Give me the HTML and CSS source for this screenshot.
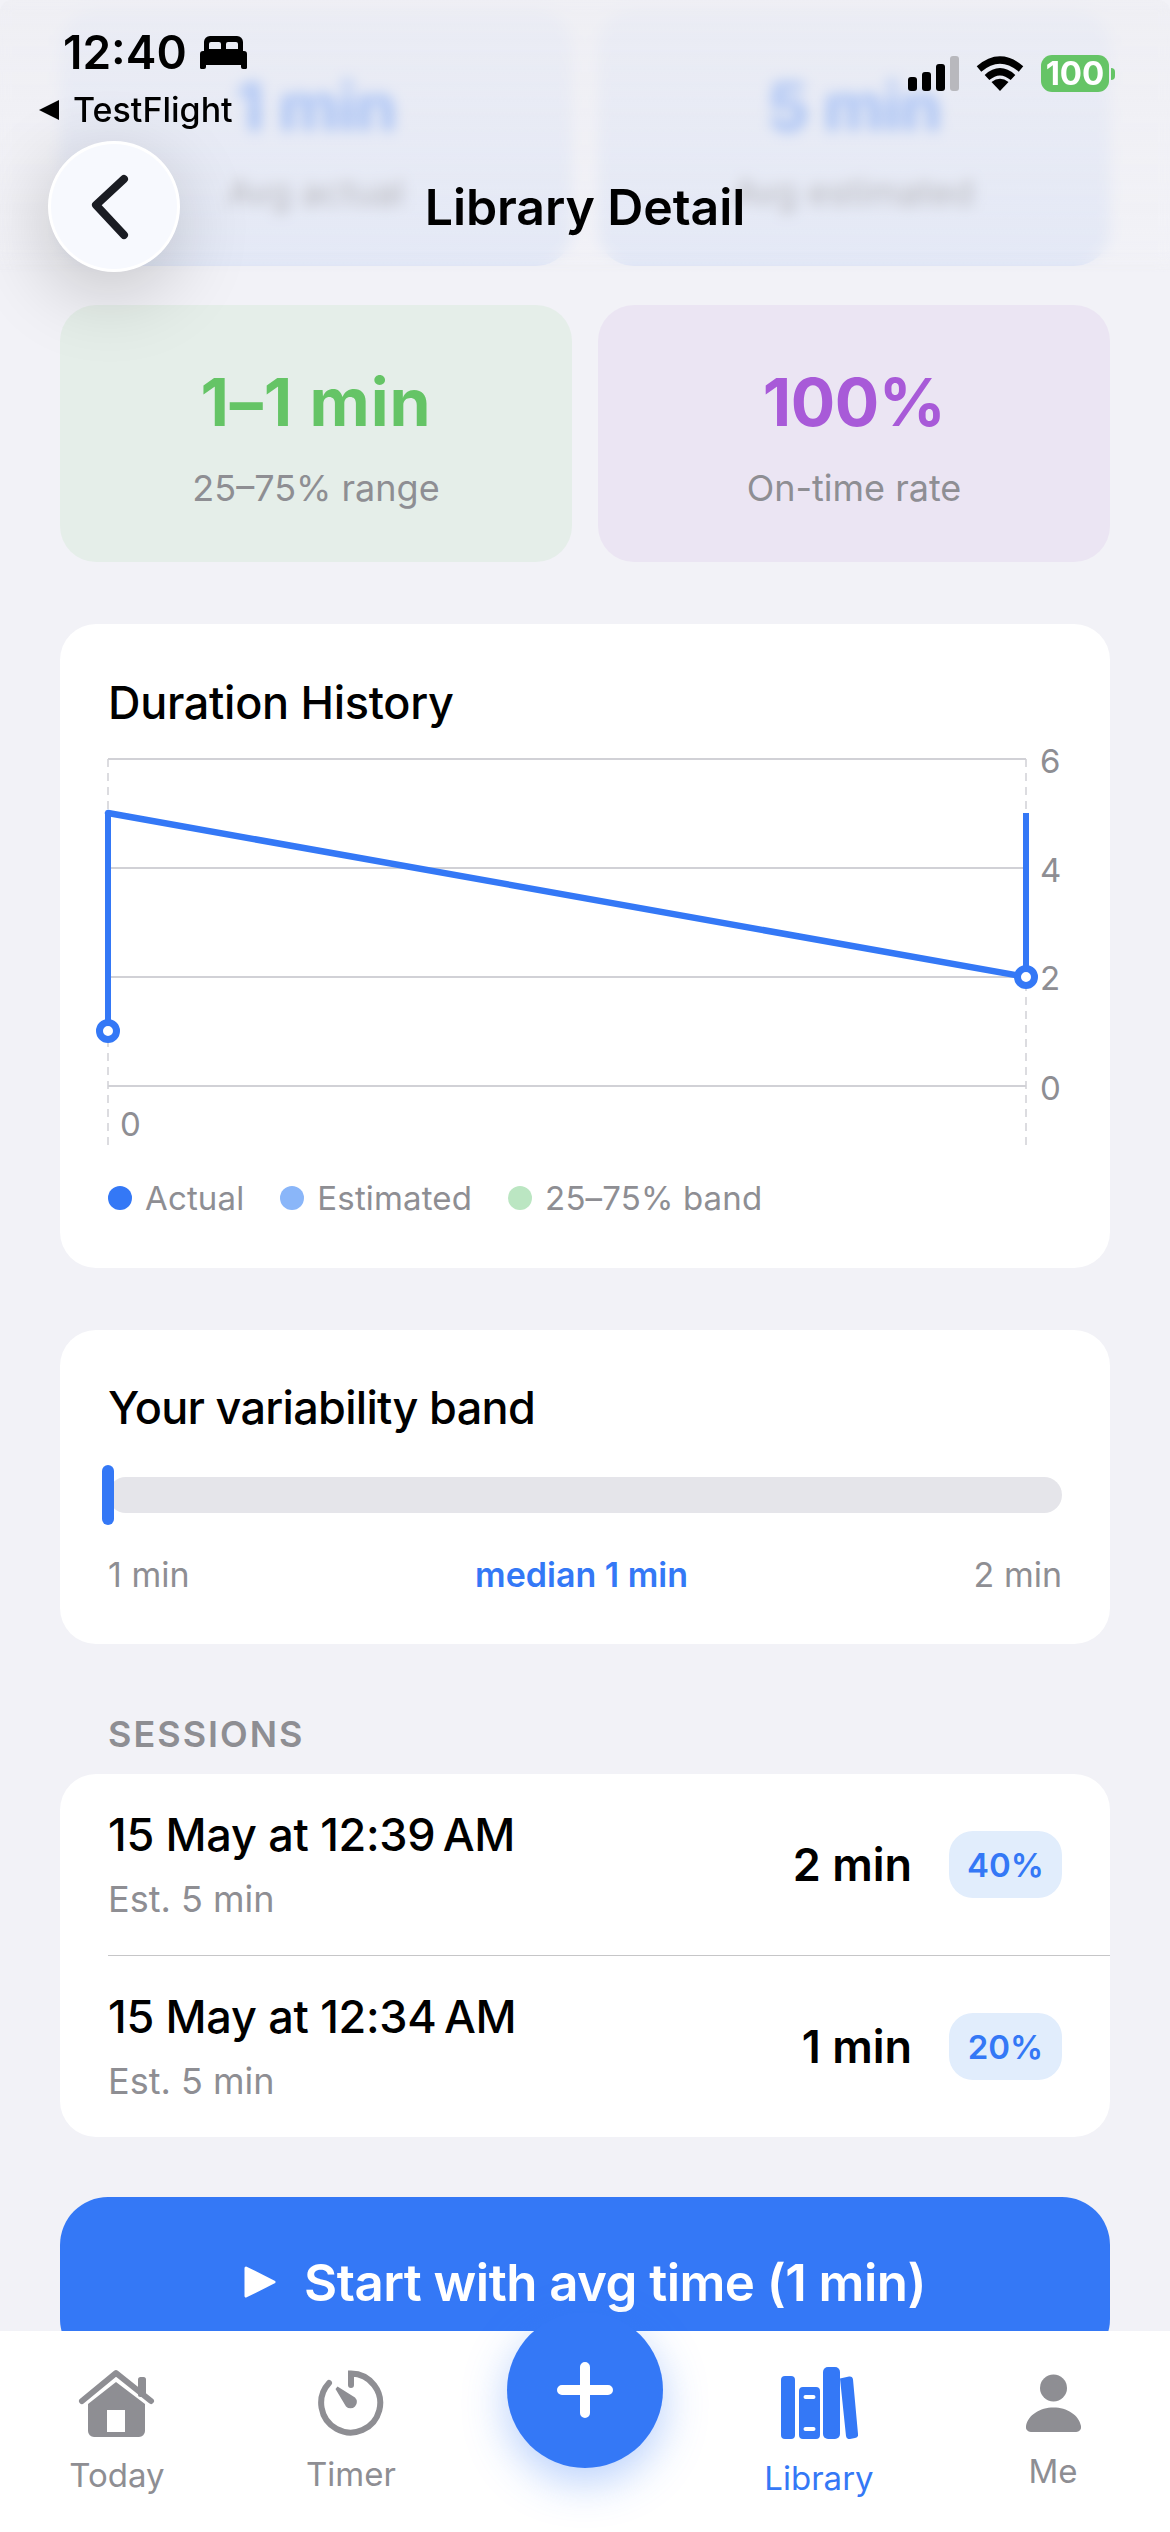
FILE: index.html
```html
<!DOCTYPE html>
<html lang="en">
<head>
<meta charset="utf-8">
<title>Library Detail</title>
<link rel="stylesheet" href="styles.css">
</head>
<body>
<main class="content">
  <section class="stat-row">
    <div class="stat stat-blue"><div class="stat-value">1 min</div><div class="stat-label">Avg actual</div></div>
    <div class="stat stat-blue"><div class="stat-value">5 min</div><div class="stat-label">Avg estimated</div></div>
  </section>
  <section class="stat-row">
    <div class="stat stat-green"><div class="stat-value">1–1 min</div><div class="stat-label">25–75% range</div></div>
    <div class="stat stat-purple"><div class="stat-value">100%</div><div class="stat-label">On-time rate</div></div>
  </section>

  <section class="card chart-card">
    <h2 class="card-title">Duration History</h2>
    <svg class="chart" viewBox="0 0 954 410" width="954" height="410">
      <g class="grid">
        <line x1="0" y1="19" x2="918" y2="19"/>
        <line x1="0" y1="128" x2="918" y2="128"/>
        <line x1="0" y1="237" x2="918" y2="237"/>
        <line x1="0" y1="346" x2="918" y2="346"/>
      </g>
      <g class="grid-dash">
        <line x1="0" y1="19" x2="0" y2="407"/>
        <line x1="918" y1="19" x2="918" y2="407"/>
      </g>
      <g class="axis">
        <text x="932" y="33">6</text>
        <text x="932" y="142">4</text>
        <text x="932" y="250">2</text>
        <text x="932" y="360">0</text>
        <text x="12" y="396">0</text>
      </g>
      <line class="whisker" x1="0" y1="73" x2="0" y2="291"/>
      <line class="whisker" x1="918" y1="73" x2="918" y2="237"/>
      <line class="trend" x1="0" y1="73" x2="918" y2="237"/>
      <circle class="point" cx="0" cy="291" r="8.500"/>
      <circle class="point" cx="918" cy="237" r="8.500"/>
    </svg>
    <div class="legend">
      <span class="legend-item"><i class="dot dot-actual"></i>Actual</span>
      <span class="legend-item"><i class="dot dot-est"></i>Estimated</span>
      <span class="legend-item"><i class="dot dot-band"></i>25–75% band</span>
    </div>
  </section>

  <section class="card band-card">
    <h2 class="card-title">Your variability band</h2>
    <div class="band-track"><div class="band-bar"></div><div class="band-marker"></div></div>
    <div class="band-labels"><span>1 min</span><span class="band-median">median 1 min</span><span>2 min</span></div>
  </section>

  <h3 class="section-label">SESSIONS</h3>
  <section class="card sessions">
    <div class="session session-first">
      <div class="session-text"><div class="session-date">15 May at 12:39&#8239;AM</div><div class="session-est">Est. 5 min</div></div>
      <div class="session-side"><span class="session-value">2 min</span><span class="badge">40%</span></div>
    </div>
    <div class="session">
      <div class="session-text"><div class="session-date">15 May at 12:34&#8239;AM</div><div class="session-est">Est. 5 min</div></div>
      <div class="session-side"><span class="session-value">1 min</span><span class="badge">20%</span></div>
    </div>
  </section>

  <div class="start-btn">
    <svg class="play" viewBox="0 0 32 32" width="32" height="32"><path d="M2 2 L30 16 L2 30 Z"/></svg>
    <span>Start with avg time (1 min)</span>
  </div>
</main>

<header class="top">
  <div class="top-blur"></div>
  <div class="status">
    <div class="status-left">
      <div class="clock"><span>12:40</span>
        <svg class="bed" viewBox="0 0 47 33" width="47" height="33"><path fill-rule="evenodd" d="M4 15V6a6 6 0 0 1 6-6h27a6 6 0 0 1 6 6v9H4Zm5-2h12V8a2 2 0 0 0-2-2h-8a2 2 0 0 0-2 2v5Zm17 0h12V8a2 2 0 0 0-2-2h-8a2 2 0 0 0-2 2v5Z"/><path d="M3 15h41a3 3 0 0 1 3 3v12a2 2 0 0 1-2 3h-2a2 2 0 0 1-2-2v-2H6v2a2 2 0 0 1-2 2H2a2 2 0 0 1-2-3V18a3 3 0 0 1 3-3Z"/></svg>
      </div>
      <div class="back-app"><svg class="back-tri" viewBox="0 0 22 22" width="22" height="22"><path d="M1 11 L21 1 V21 Z"/></svg><span>TestFlight</span></div>
    </div>
    <div class="status-right">
      <div class="signal"><i class="bar bar1"></i><i class="bar bar2"></i><i class="bar bar3"></i><i class="bar bar4"></i></div>
      <svg class="wifi" viewBox="0 0 48 36" width="48" height="36"><path class="wifi-arc" d="M3 14 Q24 -4 45 14"/><path class="wifi-arc" d="M11 22.500 Q24 11 37 22.500"/><path d="M15.500 27 Q24 20.500 32.500 27 L24 36 Z"/></svg>
      <div class="battery"><span class="battery-body">100</span><i class="battery-nub"></i></div>
    </div>
  </div>
  <div class="nav">
    <div class="back-btn"><svg viewBox="0 0 44 68" width="44" height="68"><path d="M36 6 L8 32 L36 62"/></svg></div>
    <h1 class="nav-title">Library Detail</h1>
  </div>
</header>

<nav class="tabs">
  <div class="tab tab-today">
    <svg viewBox="0 0 78 68" width="78" height="68"><rect x="60" y="8" width="8" height="20" rx="2.500"/><path class="roof" d="M4 32 L38 4 L73 32"/><path fill-rule="evenodd" d="M38 13 L67 35 V62 a6 6 0 0 1 -6 6 H16 a6 6 0 0 1 -6 -6 V35 Z M29 41 V63 H47 V41 Z"/></svg>
    <span>Today</span>
  </div>
  <div class="tab tab-timer">
    <svg viewBox="0 0 66 66" width="66" height="66"><path class="timer-ring" d="M33 15 V3.500 A29.500 29.500 0 1 1 11 13"/><path d="M17.500 19 L19.500 16.500 L37 27.500 A6 6 0 1 1 28 36.500 Z"/></svg>
    <span>Timer</span>
  </div>
  <div class="tab tab-spacer"></div>
  <div class="tab tab-library">
    <svg viewBox="0 0 77 72" width="77" height="72"><rect x="0" y="9" width="14" height="63" rx="4"/><path fill-rule="evenodd" d="M22 20h13a4 4 0 0 1 4 4v44a4 4 0 0 1-4 4H22a4 4 0 0 1-4-4V24a4 4 0 0 1 4-4Zm2.500 8a2 2 0 0 0 0 4h8a2 2 0 0 0 0-4h-8Zm0 32a2 2 0 0 0 0 4h8a2 2 0 0 0 0-4h-8Z"/><rect x="42" y="0" width="17" height="72" rx="5"/><path d="M59 11.500 L68 9.500 a3.500 3.500 0 0 1 4 3 L77 67 a3.500 3.500 0 0 1 -3 4 L69 72 a3.500 3.500 0 0 1 -4 -3 Z"/></svg>
    <span>Library</span>
  </div>
  <div class="tab tab-me">
    <svg viewBox="0 0 55 58" width="55" height="58"><circle cx="27.500" cy="14" r="13.500"/><path d="M0 52 C2 41 14 33.500 27.500 33.500 S53 41 55 52 a5 5 0 0 1 -5 6 H5 a5 5 0 0 1 -5 -6 Z"/></svg>
    <span>Me</span>
  </div>
  <div class="fab"><svg viewBox="0 0 56 56" width="56" height="56"><path d="M28 5 V51 M5 28 H51"/></svg></div>
</nav>
</body>
</html>
```
FILE: styles.css
```css
* { box-sizing: border-box; }
html, body { margin: 0; padding: 0; }
body {
  width: 1170px;
  height: 2532px;
  position: relative;
  overflow: hidden;
  background: #f2f2f7;
  font-family: Inter, "Liberation Sans", sans-serif;
  color: #000;
}
h1, h2, h3 { margin: 0; font-weight: 500; }

.content { padding: 9px 60px 0; }

.stat-row { display: flex; gap: 26px; margin-bottom: 39px; }
.stat {
  flex: 1;
  height: 257px;
  border-radius: 36px;
  padding-top: 52px;
  text-align: center;
}
.stat-blue { background: rgba(52, 120, 246, .1); color: #3478f6; }
.stat-green { background: #e5eee9; color: #65c466; }
.stat-purple { background: #ebe5f3; color: #a85ad8; }
.stat-value { font-size: 66px; line-height: 90px; font-weight: 700; letter-spacing: -.5px; }
.stat-green .stat-value { letter-spacing: .9px; }
.stat-label { margin-top: 20px; font-size: 36px; line-height: 42px; color: #8e8e93; }

.card { background: #fff; border-radius: 36px; }
.card-title { font-size: 45px; line-height: 60px; }
.chart-card .card-title { letter-spacing: -.3px; }
.band-card .card-title { letter-spacing: -.7px; }

.chart-card { margin-top: 62px; height: 644px; padding: 49px 48px 0; }
.chart { display: block; margin-top: 7px; overflow: visible; }
.grid line { stroke: #d1d1d6; stroke-width: 2; }
.grid-dash line { stroke: #d1d1d6; stroke-width: 1.500; stroke-dasharray: 8 6; }
.axis text { font-size: 33px; fill: #8e8e93; font-family: Inter, sans-serif; }
.whisker { stroke: #3478f6; stroke-width: 6; }
.trend { stroke: #3478f6; stroke-width: 6.500; stroke-linecap: round; }
.point { fill: #fff; stroke: #3478f6; stroke-width: 7; }

.legend { display: flex; gap: 36px; margin-top: 27px; font-size: 33px; line-height: 42px; letter-spacing: .15px; color: #8e8e93; }
.legend-item { display: flex; align-items: center; gap: 13px; }
.dot { width: 24px; height: 24px; border-radius: 50%; }
.dot-actual { background: #3478f6; }
.dot-est { background: #8ab6f9; }
.dot-band { background: #bbe6c2; }

.band-card { margin-top: 62px; height: 314px; padding: 48px 48px 0; }
.band-track { position: relative; display: flex; align-items: center; height: 60px; margin-top: 27px; }
.band-bar { width: 100%; height: 36px; border-radius: 18px; background: #e5e5ea; }
.band-marker { position: absolute; left: -6px; top: 0; width: 12px; height: 60px; border-radius: 6px; background: #3478f6; }
.band-labels { display: flex; justify-content: space-between; margin-top: 29px; font-size: 34px; line-height: 42px; color: #8e8e93; }
.band-median { color: #3478f6; font-weight: 600; }

.section-label { margin-top: 68px; padding-left: 48px; font-size: 36px; line-height: 44px; font-weight: 600; letter-spacing: 2px; color: #8e8e93; }

.sessions { margin-top: 18px; height: 363px; padding-left: 48px; }
.session { display: flex; justify-content: space-between; align-items: center; height: 181px; padding-right: 48px; }
.session-first { height: 182px; border-bottom: 1.500px solid #c6c6c8; }
.session-text { padding-bottom: 4px; }
.session-date { font-size: 45px; line-height: 60px; font-weight: 500; letter-spacing: -.3px; }
.session-est { margin-top: 13px; font-size: 36px; line-height: 42px; color: #8e8e93; }
.session-side { display: flex; align-items: center; gap: 37px; }
.session-value { font-size: 45px; font-weight: 600; }
.badge {
  width: 113px;
  height: 67px;
  border-radius: 24px;
  background: #e1edfc;
  color: #3478f6;
  font-size: 33px;
  font-weight: 600;
  display: flex;
  align-items: center;
  justify-content: center;
}

.start-btn {
  margin-top: 60px;
  height: 170px;
  border-radius: 48px;
  background: #3478f6;
  color: #fff;
  font-size: 51px;
  font-weight: 600;
  letter-spacing: -.54px;
  display: flex;
  align-items: center;
  justify-content: center;
  gap: 28px;
}
.play path { fill: #fff; stroke: #fff; stroke-width: 3; stroke-linejoin: round; }

/* Translucent header floating over the scrolled content */
.top {
  position: absolute;
  left: 0;
  top: 0;
  width: 1170px;
  height: 272px;
}
.top-blur {
  position: absolute;
  inset: 0;
  border-radius: 12px 12px 0 0;
  background: linear-gradient(rgba(238, 238, 243, .8), rgba(242, 242, 247, .3));
  backdrop-filter: blur(7px);
  -webkit-mask-image: linear-gradient(#000 92%, transparent);
  mask-image: linear-gradient(#000 92%, transparent);
}
.status { position: relative; display: flex; justify-content: space-between; height: 141px; }
.status-left { padding: 26px 0 0 38px; }
.clock { display: flex; align-items: center; gap: 13px; padding-left: 25px; font-size: 46px; line-height: 52px; font-weight: 600; }
.bed { display: block; }
.back-app { display: flex; align-items: center; gap: 13px; margin-top: 10px; font-size: 34px; line-height: 44px; font-weight: 500; }
.status-right { display: flex; align-items: flex-start; padding: 55px 55px 0 0; }
.signal { display: flex; align-items: flex-end; gap: 5px; height: 36px; margin-right: 17px; }
.bar { width: 9px; border-radius: 3px; background: #000; }
.bar1 { height: 14px; }
.bar2 { height: 19px; }
.bar3 { height: 27px; }
.bar4 { height: 35px; background: #b8b8bd; }
.wifi { margin-right: 17px; }
.wifi-arc { fill: none; stroke: #000; stroke-width: 7; }
.battery { display: flex; align-items: center; gap: 2px; }
.battery-body {
  width: 68px;
  height: 37px;
  border-radius: 11px;
  background: #65c466;
  color: #fff;
  font-size: 33px;
  font-weight: 700;
  line-height: 37px;
  text-align: center;
}
.battery-nub { width: 4px; height: 12px; border-radius: 0 4px 4px 0; background: #65c466; }

.nav { position: relative; height: 131px; display: flex; align-items: center; justify-content: center; }
.back-btn {
  position: absolute;
  left: 48px;
  top: 0;
  width: 132px;
  height: 131px;
  border-radius: 50%;
  background: #f7f9fe;
  border: 3px solid #fff;
  box-shadow: -4px 20px 80px rgba(0, 0, 0, .2);
  display: flex;
  align-items: center;
  justify-content: center;
}
.back-btn svg { margin-right: 8px; }
.back-btn path { fill: none; stroke: #1a1c23; stroke-width: 8; stroke-linecap: round; stroke-linejoin: round; }
.nav-title { font-size: 50px; line-height: 60px; font-weight: 600; letter-spacing: -.1px; }

.tabs {
  position: absolute;
  left: 0;
  bottom: 0;
  width: 1170px;
  height: 201px;
  background: #fff;
  display: grid;
  grid-template-columns: repeat(5, 234px);
}
.tab { display: flex; flex-direction: column; align-items: center; font-size: 33px; line-height: 40px; color: #8e8e93; }
.tab svg { display: block; fill: #8e8e93; }
.tab-today { padding-top: 38px; gap: 18px; }
.tab-timer { padding-top: 39px; gap: 18px; }
.tab-library { padding-top: 36px; gap: 19px; color: #3478f6; }
.tab-library svg { fill: #3478f6; }
.tab-me { padding-top: 43px; gap: 19px; }
.tab .roof { fill: none; stroke: #8e8e93; stroke-width: 6; stroke-linecap: round; stroke-linejoin: round; }
.tab .timer-ring { fill: none; stroke: #8e8e93; stroke-width: 6; stroke-linecap: round; }
.fab {
  position: absolute;
  left: 507px;
  top: -19px;
  width: 156px;
  height: 156px;
  border-radius: 50%;
  background: #3478f6;
  box-shadow: 0 14px 44px rgba(52, 120, 246, .35);
  display: flex;
  align-items: center;
  justify-content: center;
}
.fab path { fill: none; stroke: #fff; stroke-width: 10; stroke-linecap: round; }
```
